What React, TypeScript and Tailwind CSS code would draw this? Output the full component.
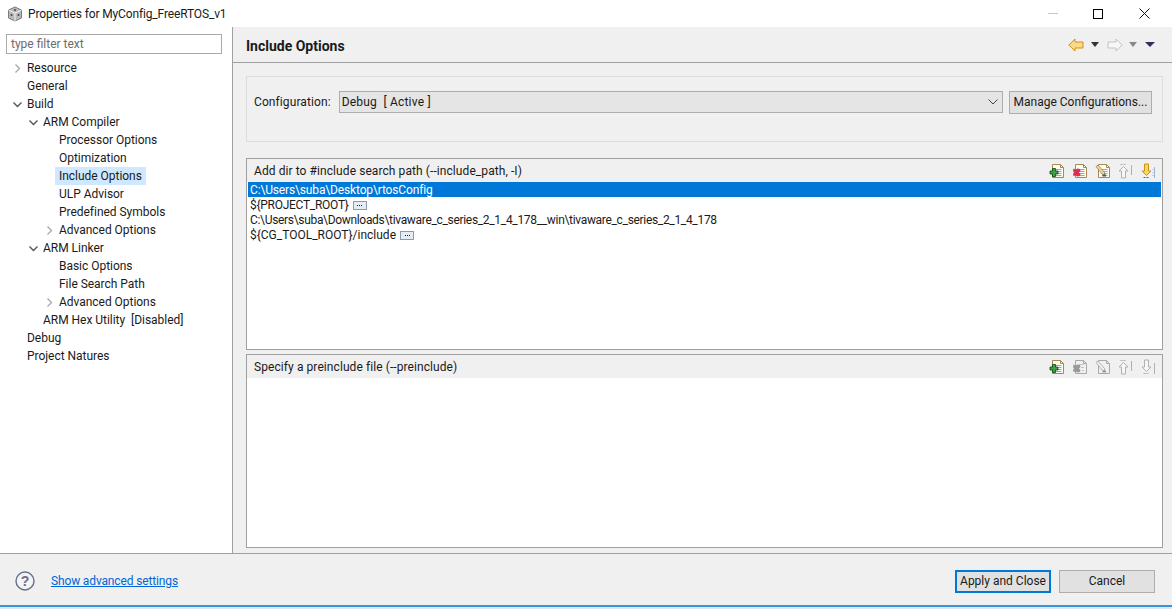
import React from "react";

const font = "font-['Roboto','Noto_Sans',sans-serif]";

type Node = { label: string; depth: number; twist?: "open" | "closed"; selected?: boolean };

const treeItems: Node[] = [
  { label: "Resource", depth: 0, twist: "closed" },
  { label: "General", depth: 0 },
  { label: "Build", depth: 0, twist: "open" },
  { label: "ARM Compiler", depth: 1, twist: "open" },
  { label: "Processor Options", depth: 2 },
  { label: "Optimization", depth: 2 },
  { label: "Include Options", depth: 2, selected: true },
  { label: "ULP Advisor", depth: 2 },
  { label: "Predefined Symbols", depth: 2 },
  { label: "Advanced Options", depth: 2, twist: "closed" },
  { label: "ARM Linker", depth: 1, twist: "open" },
  { label: "Basic Options", depth: 2 },
  { label: "File Search Path", depth: 2 },
  { label: "Advanced Options", depth: 2, twist: "closed" },
  { label: "ARM Hex Utility  [Disabled]", depth: 1 },
  { label: "Debug", depth: 0 },
  { label: "Project Natures", depth: 0 },
];

const Twist = ({ kind }: { kind?: "open" | "closed" }) => {
  if (!kind) return <span className="w-[9px] h-[9px] shrink-0" />;
  return (
    <svg width="9" height="9" viewBox="0 0 9 9" fill="none" className="shrink-0">
      {kind === "open" ? (
        <path d="M0.5 2.5 L4.5 6.5 L8.5 2.5" stroke="#555" strokeWidth="1.4" />
      ) : (
        <path d="M2.5 0.5 L6.5 4.5 L2.5 8.5" stroke="#aaa" strokeWidth="1.4" />
      )}
    </svg>
  );
};

const depthPad = ["pl-[13px]", "pl-[29px]", "pl-[45px]"];

const DocBase = ({ muted }: { muted?: boolean }) => (
  <>
    <path d="M3.5 1.5 H11.5 L14.5 4.5 V14.5 H3.5 Z" fill={muted ? "none" : "#fdfdf8"} stroke={muted ? "#a8a8a8" : "#a58a4f"} />
    <path d="M11.5 1.5 V4.5 H14.5" fill="none" stroke={muted ? "#a8a8a8" : "#a58a4f"} />
    {!muted && <path d="M7 6.5 H12.5 M7 8.5 H12.5 M7 10.5 H12.5 M7 12.5 H12.5" stroke="#8aa7d6" />}
  </>
);

const AddIcon = () => (
  <svg width="16" height="16" viewBox="0 0 16 16" className="shrink-0">
    <DocBase />
    <path d="M3.5 5.5 H6.5 V8 H9 V11 H6.5 V13.5 H3.5 V11 H1 V8 H3.5 Z" fill="#35a63f" stroke="#123f17" strokeWidth="0.8" />
  </svg>
);

const DeleteIcon = ({ muted }: { muted?: boolean }) => (
  <svg width="16" height="16" viewBox="0 0 16 16" className="shrink-0">
    <DocBase muted={muted} />
    {muted && <path d="M7 5.5 H12 M9 8.5 H12 M10 11.5 H12" stroke="#c4c4c4" />}
    <path d="M1.5 5.5 L3.5 6.5 L5.5 5.5 L8 6 L8.5 8 L7 9.5 L8.5 11 L8 13 L5.5 13.5 L3.5 12.5 L1.5 13 L1 11 L2 9.5 L1 8 Z" fill={muted ? "#9a9a9a" : "#dc3050"} />
  </svg>
);

const EditIcon = ({ muted }: { muted?: boolean }) => (
  <svg width="16" height="16" viewBox="0 0 16 16" className="shrink-0">
    <DocBase muted={muted} />
    <path d="M1 3.5 L3 2 L9.5 9.5 L9.5 12 L7 11 Z" fill={muted ? "#f0f0f0" : "#f2d79a"} stroke={muted ? "#9a9a9a" : "#8a7340"} strokeWidth="0.7" />
    <path d="M7.5 11.5 H11 V13.5 H7.5 Z" fill={muted ? "#9a9a9a" : "#3a5a8c"} />
  </svg>
);

const UpIcon = () => (
  <svg width="16" height="16" viewBox="0 0 16 16" className="shrink-0">
    <path d="M1 8 L5.5 3.5 L10 8 H7.5 V15 H3.5 V8 Z" fill="#f6f6f6" stroke="#b0b0b0" />
    <path d="M2.5 1.5 H8.5" stroke="#b0b0b0" strokeDasharray="2 1" />
    <path d="M13.5 2 V12" stroke="#b0b0b0" />
  </svg>
);

const DownIcon = ({ muted }: { muted?: boolean }) => (
  <svg width="16" height="16" viewBox="0 0 16 16" className="shrink-0">
    <path d="M1 8 L5.5 12.5 L10 8 H7.5 V1 H3.5 V8 Z" fill={muted ? "#f6f6f6" : "#fbd65c"} stroke={muted ? "#b0b0b0" : "#c8921f"} />
    <path d="M2.5 14.5 H8.5" stroke={muted ? "#b0b0b0" : "#3a6fb0"} strokeDasharray="2 1" />
    <path d="M13.5 4 V15" stroke={muted ? "#b0b0b0" : "#9db4d4"} />
    {!muted && <path d="M11 6.5 H13 M11 9.5 H13 M11 12.5 H13" stroke="#c2d0e4" />}
  </svg>
);

const Ellipsis = () => (
  <span className="inline-flex items-center justify-center ml-[4px] w-[14px] h-[9px] border border-[#8c9bb0] bg-[#e6ecf4] align-middle gap-[1px]">
    <span className="w-px h-px bg-[#222]" />
    <span className="w-px h-px bg-[#222]" />
    <span className="w-px h-px bg-[#222]" />
  </span>
);

const HistoryArrow = ({ active }: { active?: boolean }) => (
  <svg width="16" height="14" viewBox="0 0 16 14" className="shrink-0">
    {active ? (
      <path d="M0.8 7 L7 1 V4 H15 V10 H7 V13 Z" fill="#fbd98a" stroke="#d4900f" />
    ) : (
      <path d="M15.2 7 L9 1 V4 H1 V10 H9 V13 Z" fill="#f7f7f7" stroke="#c4c4c4" />
    )}
  </svg>
);

const Caret = ({ color, w = 8 }: { color: string; w?: number }) => (
  <svg width={w} height="5" viewBox={`0 0 ${w} 5`} className="shrink-0">
    <path d={`M0 0 H${w} L${w / 2} 5 Z`} fill={color} />
  </svg>
);

const SectionHead = ({ title, children }: { title: string; children: React.ReactNode }) => (
  <div className="h-[23px] shrink-0 flex items-center justify-between pl-[7px] pr-[5px] bg-[#f0f0f0]">
    <span className="text-[#1a1a1a] tracking-[0.08px] pt-[1px]">{title}</span>
    <div className="flex items-center gap-[7px]">{children}</div>
  </div>
);

export default function App() {
  return (
    <div className={`${font} w-[1172px] h-[609px] overflow-hidden flex flex-col bg-white text-[12px] leading-[18px] text-[#1a1a1a]`}>
      {/* Title bar */}
      <div className="h-[27px] shrink-0 flex items-center bg-white">
        <svg width="16" height="16" viewBox="0 0 16 16" className="ml-[7px] shrink-0">
          <path d="M8 1 L14.5 4 V12 L8 15 L1.5 12 V4 Z" fill="#b9b9b9" stroke="#7a7a7a" />
          <path d="M1.5 4 L8 7.2 L14.5 4 M8 7.2 V15" fill="none" stroke="#f2f2f2" />
          <circle cx="4.5" cy="9" r="1" fill="#444" />
          <circle cx="11.5" cy="9" r="1" fill="#444" />
          <circle cx="8" cy="4" r="1" fill="#444" />
        </svg>
        <span className="ml-[5px] tracking-[-0.14px]">Properties for MyConfig_FreeRTOS_v1</span>
        <div className="ml-auto flex items-center">
          <span className="w-[10px] h-px bg-[#c8c8c8] mr-[35px]" />
          <span className="w-[10px] h-[10px] border border-black mr-[36px]" />
          <svg width="11" height="11" viewBox="0 0 11 11" className="mr-[22px]">
            <path d="M0.5 0.5 L10.5 10.5 M10.5 0.5 L0.5 10.5" stroke="#111" />
          </svg>
        </div>
      </div>

      <div className="flex-1 min-h-0 flex">
        {/* Left tree */}
        <aside className="w-[232px] shrink-0 bg-white pt-[7px]">
          <div className="ml-[6px] w-[216px] h-[20px] border border-[#a9a9a9] flex items-center pl-[4px] text-[#6d6d6d]">
            type filter text
          </div>
          <ul className="mt-[5px] tracking-[-0.03px]">
            {treeItems.map((item, i) => (
              <li key={i} className={`h-[18px] flex items-center gap-[5px] whitespace-pre ${depthPad[item.depth]}`}>
                <Twist kind={item.twist} />
                <span className={item.selected ? "bg-[#cde8ff] -mx-[4px] px-[4px]" : ""}>{item.label}</span>
              </li>
            ))}
          </ul>
        </aside>

        {/* Right panel */}
        <main className="flex-1 min-w-0 flex flex-col bg-[#f0f0f0] border-l border-[#a0a0a0]">
          <div className="h-[36px] shrink-0 flex items-center justify-between border-b border-[#a0a0a0] pl-[13px] pr-[17px]">
            <span className="font-bold text-[14px] pt-[2px]">Include Options</span>
            <div className="flex items-center">
              <HistoryArrow active />
              <span className="ml-[7px]"><Caret color="#333" /></span>
              <span className="ml-[8px]"><HistoryArrow /></span>
              <span className="ml-[6px]"><Caret color="#888" /></span>
              <span className="ml-[8px]"><Caret color="#3b2a5c" w={10} /></span>
            </div>
          </div>

          <div className="flex-1 min-h-0 pl-[13px] pr-[9px] pt-[13px] pb-[5px] flex flex-col">
            {/* Configuration group */}
            <div className="h-[66px] shrink-0 border border-[#dcdcdc] pl-[7px] pr-[10px] pt-[14px]">
              <div className="flex items-center h-[22px]">
                <span className="tracking-[0.1px]">Configuration:</span>
                <div className="ml-[8px] flex-1 h-[22px] border border-[#adadad] bg-[#e5e5e5] flex items-center justify-between pl-[2px] pr-[4px] whitespace-pre">
                  <span className="tracking-[0.2px]">Debug  [ Active ]</span>
                  <svg width="10" height="6" viewBox="0 0 10 6" fill="none">
                    <path d="M0.5 0.5 L5 5 L9.5 0.5" stroke="#444" />
                  </svg>
                </div>
                <button className="ml-[6px] w-[143px] h-[23px] border border-[#adadad] bg-[#e1e1e1] text-[#1a1a1a] whitespace-nowrap">
                  Manage Configurations...
                </button>
              </div>
            </div>

            {/* Include paths */}
            <section className="mt-[16px] h-[192px] shrink-0 border border-[#a0a0a0] bg-white flex flex-col">
              <SectionHead title="Add dir to #include search path (--include_path, -I)">
                <AddIcon />
                <DeleteIcon />
                <EditIcon />
                <UpIcon />
                <DownIcon />
              </SectionHead>
              <ul className="pl-[1px] pr-px leading-[17px]">
                <li className="h-[15px] bg-[#0078d7] text-white px-[2px] tracking-[-0.15px]">C:\Users\suba\Desktop\rtosConfig</li>
                <li className="h-[15px] px-[2px] tracking-[-0.27px]">${"{PROJECT_ROOT}"}<Ellipsis /></li>
                <li className="h-[15px] px-[2px] tracking-[-0.32px]">C:\Users\suba\Downloads\tivaware_c_series_2_1_4_178__win\tivaware_c_series_2_1_4_178</li>
                <li className="h-[15px] px-[2px]">${"{CG_TOOL_ROOT}"}/include<Ellipsis /></li>
              </ul>
            </section>

            {/* Preinclude files */}
            <section className="mt-[4px] flex-1 min-h-0 border border-[#a0a0a0] bg-white flex flex-col">
              <SectionHead title="Specify a preinclude file (--preinclude)">
                <AddIcon />
                <DeleteIcon muted />
                <EditIcon muted />
                <UpIcon />
                <DownIcon muted />
              </SectionHead>
            </section>
          </div>
        </main>
      </div>

      {/* Footer */}
      <footer className="h-[54px] shrink-0 border-t border-[#a0a0a0] border-b-2 border-b-[#3c94d8] bg-[#f0f0f0] flex items-center pl-[15px] pr-[17px] pt-[3px]">
        <svg width="20" height="20" viewBox="0 0 20 20" className="shrink-0">
          <circle cx="10" cy="10" r="9" fill="#f4f4f4" stroke="#67708a" strokeWidth="1.4" />
          <text x="10" y="15" textAnchor="middle" fontSize="14" fontWeight="700" fill="#67708a" fontFamily="Liberation Sans, sans-serif">?</text>
        </svg>
        <a className="ml-[16px] text-[#0066d9] underline tracking-[-0.14px]">Show advanced settings</a>
        <button className="ml-auto w-[96px] h-[23px] border-2 border-[#0078d7] bg-[#e1e1e1]">Apply and Close</button>
        <button className="ml-[8px] w-[96px] h-[23px] border border-[#adadad] bg-[#e1e1e1]">Cancel</button>
      </footer>
      <div className="h-[2px] shrink-0 bg-[#dbe7f1]" />
    </div>
  );
}
